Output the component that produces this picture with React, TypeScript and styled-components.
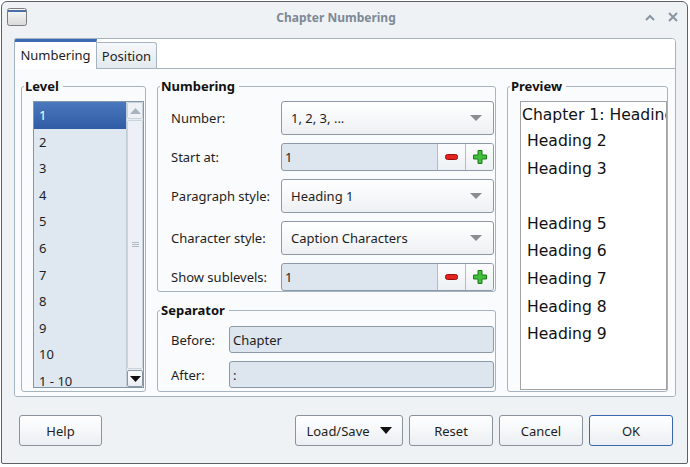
import React from 'react';
import styled, { createGlobalStyle } from 'styled-components';

const Global = createGlobalStyle`
  html, body { margin: 0; padding: 0; background: #ffffff; }
  body { font-family: "Noto Sans", "Open Sans", sans-serif; }
  *, *::before, *::after { box-sizing: border-box; }
`;

const Window = styled.div`
  margin: 1px 0 0 1px;
  width: 687px;
  height: 463px;
  border: 1px solid #5d6166;
  border-radius: 6px 6px 2px 2px;
  background: #eef2f5;
  display: flex;
  flex-direction: column;
  font-family: "Noto Sans", sans-serif;
  font-size: 13px;
  color: #1e1e1e;
  overflow: hidden;
`;

const TitleBar = styled.div`
  height: 30px;
  flex: none;
  display: flex;
  align-items: center;
  padding: 0 9px 0 5px;
`;

const TitleText = styled.div`
  flex: 1;
  text-align: center;
  font-weight: 700;
  font-size: 12px;
  color: #7d8995;
`;

const Controls = styled.div`
  display: flex;
  align-items: center;
  gap: 13px;
`;

const TabWidget = styled.div`
  margin: 6px 0 0 12px;
  width: 662px;
  height: 359px;
  flex: none;
  border: 1px solid #a6b3c0;
  border-radius: 2px 4px 3px 3px;
  display: flex;
  flex-direction: column;
  overflow: hidden;
`;

const TabBar = styled.div`
  height: 30px;
  flex: none;
  display: flex;
  background: #ffffff;
`;

const Tab = styled.div<{ $active?: boolean; $w: number }>`
  width: ${(p) => p.$w}px;
  display: flex;
  align-items: center;
  justify-content: center;
  font-size: 13px;
  color: #1e1e1e;
  ${(p) =>
    p.$active
      ? `
    border-top: 3px solid #3b6bb3;
    border-right: 1px solid #a6b3c0;
    background: #ffffff;
    padding-bottom: 1px;
  `
      : `
    margin-top: 3px;
    border: 1px solid #a6b3c0;
    border-left: none;
    border-radius: 0 3px 0 0;
    background: linear-gradient(#f6f8fa, #e3e9ee);
  `}
`;

const TabFiller = styled.div`
  flex: 1;
  border-bottom: 1px solid #a6b3c0;
`;

const Pane = styled.div`
  flex: 1;
  min-height: 0;
  display: flex;
  gap: 11px;
  padding: 9px 6px 4px 6px;
  background: #fafbfc;
`;

const Column = styled.div<{ $w: number }>`
  width: ${(p) => p.$w}px;
  flex: none;
  min-height: 0;
  display: flex;
  flex-direction: column;
  gap: 10px;
`;

const Group = styled.fieldset<{ $w?: number; $grow?: boolean }>`
  margin: 0;
  padding: 0;
  min-width: 0;
  min-height: 0;
  ${(p) => (p.$w ? `width: ${p.$w}px; flex: none;` : '')}
  ${(p) => (p.$grow ? 'flex: 1;' : '')}
  border: 1px solid #a6b3c0;
  border-radius: 3px;
  display: flex;
  flex-direction: column;
`;

const Legend = styled.legend`
  margin-left: 2px;
  padding: 0 4px 0 1px;
  font-weight: 700;
  font-size: 13px;
  line-height: 16px;
  color: #111;
`;

const GroupBody = styled.div<{ $pad: string }>`
  flex: 1;
  min-height: 0;
  display: flex;
  flex-direction: column;
  padding: ${(p) => p.$pad};
`;

const FormGrid = styled.div<{ $label: number }>`
  display: grid;
  grid-template-columns: ${(p) => p.$label}px 1fr;
  row-gap: 8px;
  align-items: center;
`;

const Label = styled.div`
  white-space: nowrap;
  color: #1e1e1e;
`;

const List = styled.div`
  flex: 1;
  min-height: 0;
  display: flex;
  border: 1px solid #8296a9;
  background: #dfe8f0;
`;

const ListItems = styled.div`
  flex: 1;
  overflow: hidden;
`;

const ListItem = styled.div<{ $selected?: boolean }>`
  height: 26.6px;
  line-height: 26.6px;
  padding-left: 5px;
  font-size: 13px;
  color: ${(p) => (p.$selected ? '#ffffff' : '#1e1e1e')};
  background: ${(p) => (p.$selected ? 'linear-gradient(#4a78bd, #2f5ca4)' : 'transparent')};
`;

const ScrollBar = styled.div`
  width: 17px;
  flex: none;
  display: flex;
  flex-direction: column;
  border-left: 1px solid #c3cdd6;
  background: #e8edf2;
`;

const ScrollBtn = styled.div<{ $enabled?: boolean }>`
  height: 17px;
  flex: none;
  display: flex;
  align-items: center;
  justify-content: center;
  border: 1px solid ${(p) => (p.$enabled ? '#8b97a3' : '#c9d2da')};
  border-radius: 2px;
  background: ${(p) => (p.$enabled ? 'linear-gradient(#ffffff, #e9edf1)' : '#eef2f6')};
`;

const Thumb = styled.div`
  flex: 1;
  margin: 1px 0;
  border: 1px solid #cbd4dc;
  border-radius: 2px;
  background: #edf1f5;
  display: flex;
  align-items: center;
  justify-content: center;
`;

const Combo = styled.div`
  height: 34px;
  display: flex;
  align-items: center;
  justify-content: space-between;
  padding: 0 11px 0 9px;
  border: 1px solid #8e99a4;
  border-radius: 3px;
  background: linear-gradient(#ffffff, #edf0f3);
  color: #1e1e1e;
`;

const Spin = styled.div`
  height: 28px;
  display: flex;
  border: 1px solid #8c99a6;
  border-radius: 3px;
  background: #dde6ee;
  overflow: hidden;
`;

const SpinValue = styled.div`
  flex: 1;
  display: flex;
  align-items: center;
  padding-left: 3px;
`;

const SpinButton = styled.div`
  width: 28px;
  flex: none;
  display: flex;
  align-items: center;
  justify-content: center;
  border-left: 1px solid #b3bdc7;
  background: linear-gradient(#fbfcfd, #eef1f4);
`;

const TextField = styled.div`
  height: 27px;
  display: flex;
  align-items: center;
  padding-left: 3px;
  border: 1px solid #8c99a6;
  border-radius: 3px;
  background: #dde6ee;
`;

const PreviewBox = styled.div`
  flex: 1;
  min-height: 0;
  overflow: hidden;
  border: 1px solid #a3a3a3;
  background: #ffffff;
  font-family: "DejaVu Sans", sans-serif;
  font-size: 15.6px;
  color: #111;
`;

const PreviewLine = styled.div<{ $lead?: boolean }>`
  white-space: nowrap;
  height: ${(p) => (p.$lead ? 26 : 27.6)}px;
  line-height: ${(p) => (p.$lead ? 26 : 27.6)}px;
  padding-left: ${(p) => (p.$lead ? 1 : 6)}px;
`;

const Footer = styled.div`
  margin-top: 18px;
  display: flex;
  justify-content: space-between;
  padding: 0 14px 0 17px;
`;

const ButtonRow = styled.div`
  display: flex;
  gap: 6px;
`;

const Button = styled.div<{ $w: number; $primary?: boolean }>`
  width: ${(p) => p.$w}px;
  height: 31px;
  display: flex;
  align-items: center;
  justify-content: center;
  gap: 10px;
  border: 1px solid ${(p) => (p.$primary ? '#3a67b0' : '#8a929b')};
  border-radius: 3px;
  background: linear-gradient(#ffffff, #ebeff3);
  font-size: 13px;
  color: #1e1e1e;
`;

const Triangle = ({ w, h, color, up }: { w: number; h: number; color: string; up?: boolean }) => (
  <svg width={w} height={h} viewBox={`0 0 ${w} ${h}`}>
    <polygon points={up ? `0,${h} ${w},${h} ${w / 2},0` : `0,0 ${w},0 ${w / 2},${h}`} fill={color} />
  </svg>
);

const WinIcon = () => (
  <svg width="20" height="18" viewBox="0 0 20 18">
    <defs>
      <linearGradient id="wg" x1="0" y1="0" x2="0" y2="1">
        <stop offset="0" stopColor="#fbfbfb" />
        <stop offset="1" stopColor="#d9d9d9" />
      </linearGradient>
    </defs>
    <rect x="0.5" y="0.5" width="19" height="17" rx="2" fill="url(#wg)" stroke="#7c7c7c" />
    <rect x="1" y="2" width="18" height="2" fill="#4a6fa8" />
  </svg>
);

const Minus = () => (
  <svg width="13" height="6" viewBox="0 0 13 6">
    <rect x="0.5" y="0.5" width="12" height="5" rx="2" fill="#e3231e" stroke="#9b1010" />
  </svg>
);

const Plus = () => (
  <svg width="14" height="14" viewBox="0 0 14 14">
    <path
      d="M5 0.5 H9 V5 H13.5 V9 H9 V13.5 H5 V9 H0.5 V5 H5 Z"
      fill="#3fbf3a"
      stroke="#1d7a1b"
      strokeWidth="1"
      strokeLinejoin="round"
    />
  </svg>
);

const Grip = () => (
  <svg width="7" height="7" viewBox="0 0 7 7">
    <path d="M0 1.5 H7 M0 3.5 H7 M0 5.5 H7" stroke="#b0bac4" strokeWidth="1" />
  </svg>
);

const levels = ['1', '2', '3', '4', '5', '6', '7', '8', '9', '10', '1 - 10'];
const previewLines = [
  { text: 'Chapter 1: Heading 1', lead: true },
  { text: 'Heading 2' },
  { text: 'Heading 3' },
  { text: '' },
  { text: 'Heading 5' },
  { text: 'Heading 6' },
  { text: 'Heading 7' },
  { text: 'Heading 8' },
  { text: 'Heading 9' },
];

const ComboBox = ({ value }: { value: string }) => (
  <Combo>
    <span>{value}</span>
    <Triangle w={12} h={6} color="#8a8d90" />
  </Combo>
);

const SpinBox = ({ value }: { value: string }) => (
  <Spin>
    <SpinValue>{value}</SpinValue>
    <SpinButton>
      <Minus />
    </SpinButton>
    <SpinButton>
      <Plus />
    </SpinButton>
  </Spin>
);

export default function App() {
  return (
    <>
      <Global />
      <Window>
        <TitleBar>
          <WinIcon />
          <TitleText>Chapter Numbering</TitleText>
          <Controls>
            <svg width="10" height="7" viewBox="0 0 10 7">
              <path d="M1 6 L5 2 L9 6" fill="none" stroke="#8a96a2" strokeWidth="2" />
            </svg>
            <svg width="10" height="10" viewBox="0 0 10 10">
              <path d="M1 1 L9 9 M9 1 L1 9" fill="none" stroke="#8a96a2" strokeWidth="2" />
            </svg>
          </Controls>
        </TitleBar>

        <TabWidget>
          <TabBar>
            <Tab $active $w={82}>Numbering</Tab>
            <Tab $w={60}>Position</Tab>
            <TabFiller />
          </TabBar>
          <Pane>
            <Group $w={125}>
              <Legend>Level</Legend>
              <GroupBody $pad="7px 1px 3px 11px">
                <List>
                  <ListItems>
                    {levels.map((l, i) => (
                      <ListItem key={l} $selected={i === 0}>
                        {l}
                      </ListItem>
                    ))}
                  </ListItems>
                  <ScrollBar>
                    <ScrollBtn>
                      <Triangle w={11} h={6} color="#a9b3bd" up />
                    </ScrollBtn>
                    <Thumb>
                      <Grip />
                    </Thumb>
                    <ScrollBtn $enabled>
                      <Triangle w={11} h={6} color="#111111" />
                    </ScrollBtn>
                  </ScrollBar>
                </List>
              </GroupBody>
            </Group>

            <Column $w={339}>
              <Group>
                <Legend>Numbering</Legend>
                <GroupBody $pad="7px 1px 0 13px">
                  <FormGrid $label={110}>
                    <Label>Number:</Label>
                    <ComboBox value="1, 2, 3, ..." />
                    <Label>Start at:</Label>
                    <SpinBox value="1" />
                    <Label>Paragraph style:</Label>
                    <ComboBox value="Heading 1" />
                    <Label>Character style:</Label>
                    <ComboBox value="Caption Characters" />
                    <Label>Show sublevels:</Label>
                    <SpinBox value="1" />
                  </FormGrid>
                </GroupBody>
              </Group>
              <Group $grow>
                <Legend>Separator</Legend>
                <GroupBody $pad="8px 1px 2px 13px">
                  <FormGrid $label={58}>
                    <Label>Before:</Label>
                    <TextField>Chapter</TextField>
                    <Label>After:</Label>
                    <TextField>:</TextField>
                  </FormGrid>
                </GroupBody>
              </Group>
            </Column>

            <Group $w={161}>
              <Legend>Preview</Legend>
              <GroupBody $pad="7px 0 1px 12px">
                <PreviewBox>
                  {previewLines.map((l, i) => (
                    <PreviewLine key={i} $lead={l.lead}>
                      {l.text}
                    </PreviewLine>
                  ))}
                </PreviewBox>
              </GroupBody>
            </Group>
          </Pane>
        </TabWidget>

        <Footer>
          <Button $w={83}>Help</Button>
          <ButtonRow>
            <Button $w={108}>
              Load/Save
              <Triangle w={12} h={7} color="#111111" />
            </Button>
            <Button $w={84}>Reset</Button>
            <Button $w={84}>Cancel</Button>
            <Button $w={84} $primary>
              OK
            </Button>
          </ButtonRow>
        </Footer>
      </Window>
    </>
  );
}
